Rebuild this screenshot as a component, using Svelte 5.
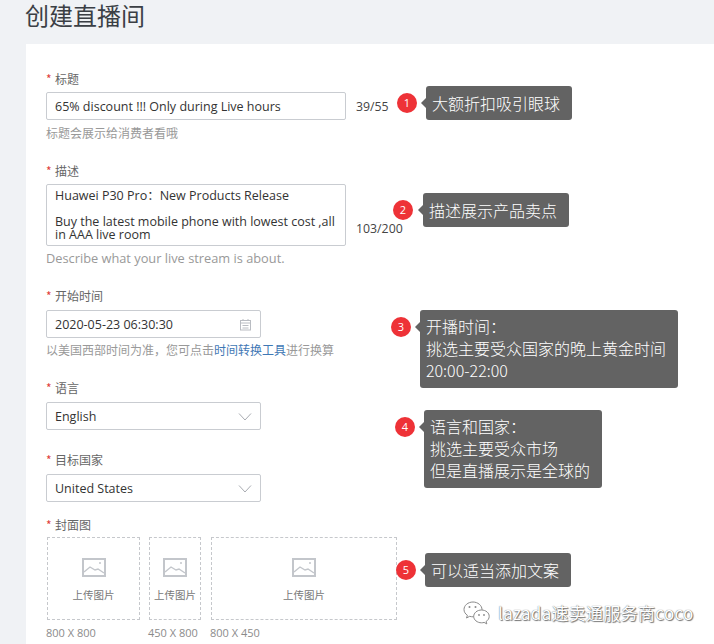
<script>
  const notes = [
    { n: 1, cls: 'n1', lines: ['大额折扣吸引眼球'] },
    { n: 2, cls: 'n2', lines: ['描述展示产品卖点'] },
    { n: 3, cls: 'n3', lines: ['开播时间：', '挑选主要受众国家的晚上黄金时间', '20:00-22:00'] },
    { n: 4, cls: 'n4', lines: ['语言和国家：', '挑选主要受众市场', '但是直播展示是全球的'] },
    { n: 5, cls: 'n5', lines: ['可以适当添加文案'] }
  ];
  const uploads = [
    { w: 'u1', size: '800 X 800' },
    { w: 'u2', size: '450 X 800' },
    { w: 'u3', size: '800 X 450' }
  ];
</script>

<div class="page">
  <h1>创建直播间</h1>
  <section class="card">
    <div class="field f-title">
      <div class="label"><i>*</i>标题</div>
      <div class="row">
        <div class="input wide">65% discount !!! Only during Live hours</div>
        <span class="count">39/55</span>
      </div>
      <div class="help">标题会展示给消费者看哦</div>
    </div>

    <div class="field f-desc">
      <div class="label"><i>*</i>描述</div>
      <div class="row end">
        <div class="textarea wide">Huawei P30 Pro：New Products Release<br /><br />Buy the latest mobile phone with lowest cost ,all in AAA live room</div>
        <span class="count">103/200</span>
      </div>
      <div class="help en">Describe what your live stream is about.</div>
    </div>

    <div class="field f-time">
      <div class="label wide-gap"><i>*</i>开始时间</div>
      <div class="input narrow">
        <span>2020-05-23 06:30:30</span>
        <svg width="13" height="13" viewBox="0 0 13 13" fill="none" stroke="#b9bcc2" stroke-width="1">
          <rect x="1.500" y="2.500" width="10" height="9.500" />
          <path d="M1.500 5h10M4 1v2M9 1v2M3.500 7.500h6M3.500 10h6" />
        </svg>
      </div>
      <div class="help">以美国西部时间为准，您可点击<a href="#top">时间转换工具</a>进行换算</div>
    </div>

    <div class="field f-lang">
      <div class="label wide-gap"><i>*</i>语言</div>
      <div class="input narrow">
        <span>English</span>
        <svg width="14" height="10" viewBox="0 0 14 10" fill="none" stroke="#a9acb2" stroke-width="1"><path d="M1 1.500l6 6.500 6-6.500" /></svg>
      </div>
    </div>

    <div class="field f-country">
      <div class="label wide-gap"><i>*</i>目标国家</div>
      <div class="input narrow">
        <span>United States</span>
        <svg width="14" height="10" viewBox="0 0 14 10" fill="none" stroke="#a9acb2" stroke-width="1"><path d="M1 1.500l6 6.500 6-6.500" /></svg>
      </div>
    </div>

    <div class="field f-cover">
      <div class="label"><i>*</i>封面图</div>
      <div class="uploads">
        {#each uploads as u}
          <div class="upload {u.w}">
            <div class="drop">
              <svg width="24" height="19" viewBox="0 0 24 19" fill="none" stroke="#c3c6cb" stroke-width="2">
                <rect x="1" y="1" width="22" height="17" />
                <path d="M2 14l6-5 5 3 3-1 6 4" stroke-width="1.400" />
                <circle cx="18" cy="5" r="1" fill="#c3c6cb" stroke="none" />
              </svg>
              <span>上传图片</span>
            </div>
            <div class="size">{u.size}</div>
          </div>
        {/each}
      </div>
    </div>
  </section>

  {#each notes as note}
    <div class="note {note.cls}">
      <b>{note.n}</b>
      <div class="bubble">
        {#each note.lines as line}<div>{line}</div>{/each}
      </div>
    </div>
  {/each}

  <div class="mark">
    <svg width="28" height="24" viewBox="0 0 28 24" fill="#fff" stroke="#8a8a8a" stroke-width="1">
      <path d="M10 1C5 1 1 4.400 1 8.500c0 2.400 1.300 4.400 3.400 5.800L3.500 17l3.200-1.700c1.100.3 2.200.5 3.300.5 4.800 0 9-3.300 9-7.300S14.800 1 10 1z" />
      <path d="M18.500 9c-4.300 0-7.800 2.900-7.800 6.400s3.500 6.400 7.800 6.400c.9 0 1.800-.1 2.600-.4l2.700 1.500-.7-2.400c1.900-1.200 3.100-3 3.100-5.100C26.300 11.900 22.800 9 18.500 9z" />
      <circle cx="6.500" cy="6" r="1" fill="#8a8a8a" stroke="none" />
      <circle cx="12.500" cy="6" r="1" fill="#8a8a8a" stroke="none" />
      <circle cx="16" cy="14" r=".9" fill="#8a8a8a" stroke="none" />
      <circle cx="21" cy="14" r=".9" fill="#8a8a8a" stroke="none" />
    </svg>
    <span>lazada速卖通服务商coco</span>
  </div>
</div>

<style>
  :global(body) {
    margin: 0;
    background: #fff;
  }
  .page {
    position: relative;
    width: 714px;
    height: 644px;
    overflow: hidden;
    background: #f0f2f5;
    font-family: "Open Sans", "Noto Sans CJK SC", sans-serif;
    color: #333;
  }
  h1 {
    margin: 0;
    padding: 0 0 0 25px;
    height: 44px;
    box-sizing: border-box;
    font-size: 24px;
    line-height: 30px;
    font-weight: 400;
    color: #3b3f45;
    font-family: "Noto Sans CJK SC", sans-serif;
  }
  .card {
    margin-left: 26px;
    height: 600px;
    background: #fff;
    padding: 26px 0 0 20px;
    box-sizing: border-box;
  }
  .field {
    display: flex;
    flex-direction: column;
  }
  .f-title { height: 92px; }
  .f-desc { height: 125px; }
  .f-time { height: 92px; }
  .f-lang { height: 72px; }
  .f-country { height: 65px; }
  .label {
    height: 18px;
    margin-bottom: 4px;
    font-size: 12px;
    line-height: 18px;
    color: #666;
    font-family: "Noto Sans CJK SC", sans-serif;
    font-weight: 400;
  }
  .label.wide-gap { margin-bottom: 5px; }
  .label i {
    display: inline-block;
    width: 9px;
    color: #e0403a;
    font-style: normal;
  }
  .row {
    display: flex;
    align-items: center;
    gap: 10px;
  }
  .row.end { align-items: flex-end; }
  .row.end .count { padding-bottom: 9px; }
  .input, .textarea {
    box-sizing: border-box;
    border: 1px solid #c9ccd1;
    border-radius: 2px;
    background: #fff;
    font-size: 12.500px;
    color: #333;
  }
  .input {
    height: 28px;
    display: flex;
    align-items: center;
    justify-content: space-between;
    padding: 1px 8px 0 8px;
  }
  .wide { width: 300px; }
  .narrow { width: 215px; }
  .textarea {
    height: 62px;
    padding: 4px 8px 3px;
    line-height: 13px;
  }
  .count {
    font-size: 12.300px;
    color: #444;
  }
  .help {
    margin-top: 5px;
    font-size: 12px;
    line-height: 17px;
    color: #999;
  }
  .f-time .help { margin-top: 4px; }
  .help.en {
    margin-top: 4px;
    font-size: 12.800px;
  }
  .help a {
    color: #3f78b5;
    text-decoration: none;
  }
  .uploads {
    display: flex;
    margin-top: -1px;
    margin-left: 1px;
  }
  .upload .drop {
    box-sizing: border-box;
    height: 83px;
    border: 1px dashed #c6c8cc;
    display: flex;
    flex-direction: column;
    align-items: center;
    padding-top: 20px;
    gap: 11px;
  }
  .u1 { width: 93px; margin-right: 9px; }
  .u2 { width: 52px; margin-right: 10px; }
  .u3 { width: 186px; }
  .drop span {
    font-size: 10.500px;
    line-height: 14px;
    color: #777;
    white-space: nowrap;
    font-family: "Noto Sans CJK SC", sans-serif;
  }
  .size {
    margin-top: 6px;
    margin-left: -1px;
    font-size: 11px;
    line-height: 14px;
    color: #8b8b8b;
    white-space: nowrap;
  }
  .note {
    position: absolute;
    display: flex;
    align-items: flex-start;
  }
  .n1 { left: 397px; top: 86px; }
  .n2 { left: 393px; top: 193px; }
  .n2 .bubble { margin-left: 10px; }
  .n3 { left: 391px; top: 310px; }
  .n4 { left: 395px; top: 410px; }
  .n5 { left: 396px; top: 553px; }
  .note b {
    width: 20px;
    height: 20px;
    margin-top: 7px;
    border-radius: 50%;
    background: #ee3237;
    color: #fff;
    font-size: 11px;
    font-weight: 400;
    line-height: 20px;
    text-align: center;
    flex: none;
  }
  .bubble {
    position: relative;
    margin-left: 9px;
    padding: 5px 12px 5px 6px;
    background: #636363;
    border-radius: 3px;
    color: #fff;
    font-size: 16px;
    line-height: 24px;
    font-family: "Noto Sans CJK SC", sans-serif;
    font-weight: 300;
    white-space: nowrap;
  }
  .bubble::before {
    content: "";
    position: absolute;
    left: -5px;
    top: 12px;
    border-style: solid;
    border-width: 5px 5px 5px 0;
    border-color: transparent #636363 transparent transparent;
  }
  .n3 .bubble, .n4 .bubble {
    padding-top: 5px;
    padding-bottom: 7px;
    line-height: 22px;
  }
  .mark {
    position: absolute;
    left: 463px;
    top: 600px;
    display: flex;
    align-items: center;
    gap: 7px;
  }
  .mark span {
    font-size: 17px;
    line-height: 26px;
    color: #fff;
    letter-spacing: 0.3px;
    font-family: "Noto Sans CJK SC", sans-serif;
    text-shadow: 0 0 1px #555, 1px 1px 1px #777;
    white-space: nowrap;
  }
</style>
